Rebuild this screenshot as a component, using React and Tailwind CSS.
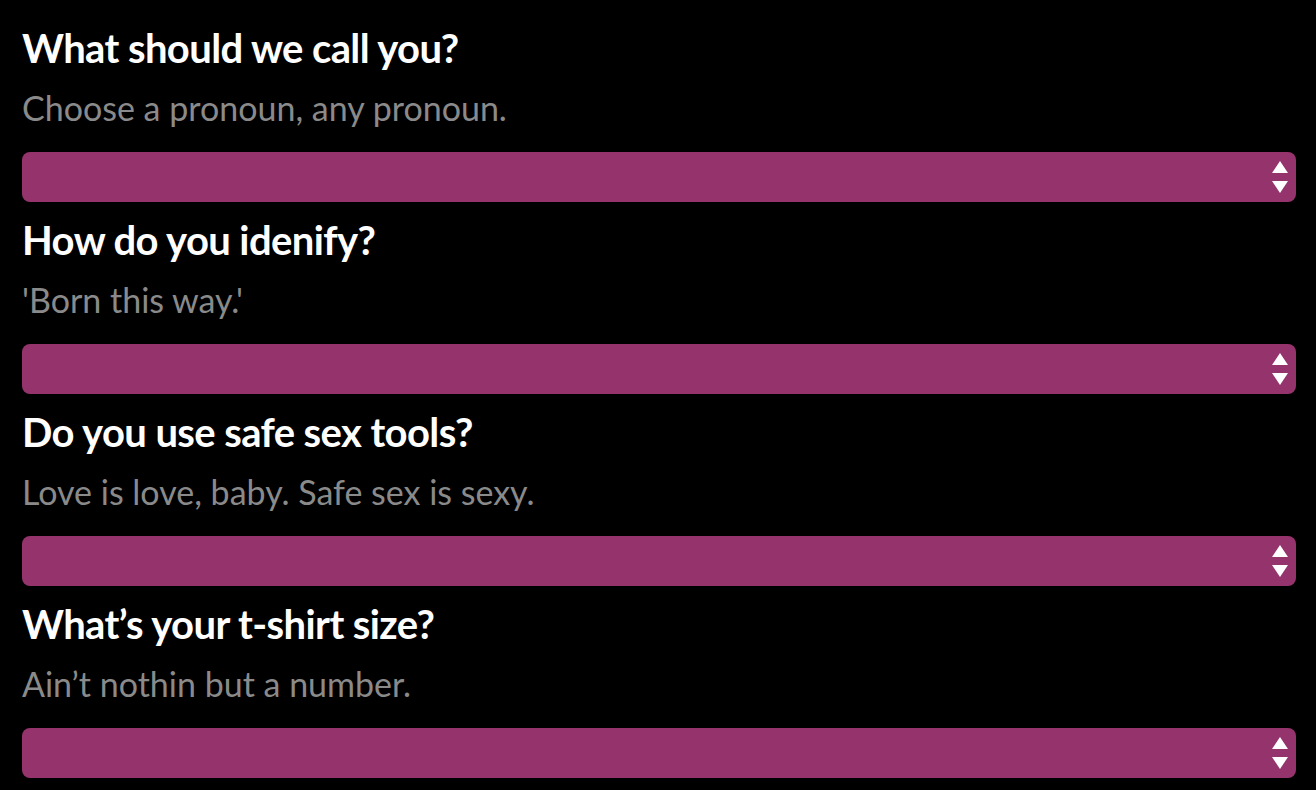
import React from 'react';

var QUESTIONS = [
  { title: 'What should we call you?', hint: 'Choose a pronoun, any pronoun.' },
  { title: 'How do you idenify?', hint: "'Born this way.'" },
  { title: 'Do you use safe sex tools?', hint: 'Love is love, baby. Safe sex is sexy.' },
  { title: 'What\u2019s your t-shirt size?', hint: 'Ain\u2019t nothin but a number.' },
];

function SelectBar() {
  return (
    <div className="h-[50px] w-full rounded-[8px] bg-[#95336c] flex items-center justify-end pr-[8px]">
      <svg width="16" height="32" viewBox="0 0 16 32" className="block">
        <polygon points="8,0 16,12 0,12" fill="#ffffff" />
        <polygon points="0,20 16,20 8,32" fill="#ffffff" />
      </svg>
    </div>
  );
}

export default function App() {
  return (
    <div className="min-h-[790px] w-full bg-black pl-[22px] pr-[20px] pt-[24px]" style={{ fontFamily: 'Lato, "Noto Sans", sans-serif' }}>
      {QUESTIONS.map(function(q, i) {
        return (
          <div key={i} className={i === 0 ? '' : 'mt-[14px]'}>
            <h2 className="text-[40px] leading-[48px] font-bold text-white tracking-[-0.6px]">{q.title}</h2>
            <p className="mt-[12px] text-[34px] leading-[48px] text-[#8a8a8a]">{q.hint}</p>
            <div className="mt-[20px]">
              <SelectBar />
            </div>
          </div>
        );
      })}
    </div>
  );
}
